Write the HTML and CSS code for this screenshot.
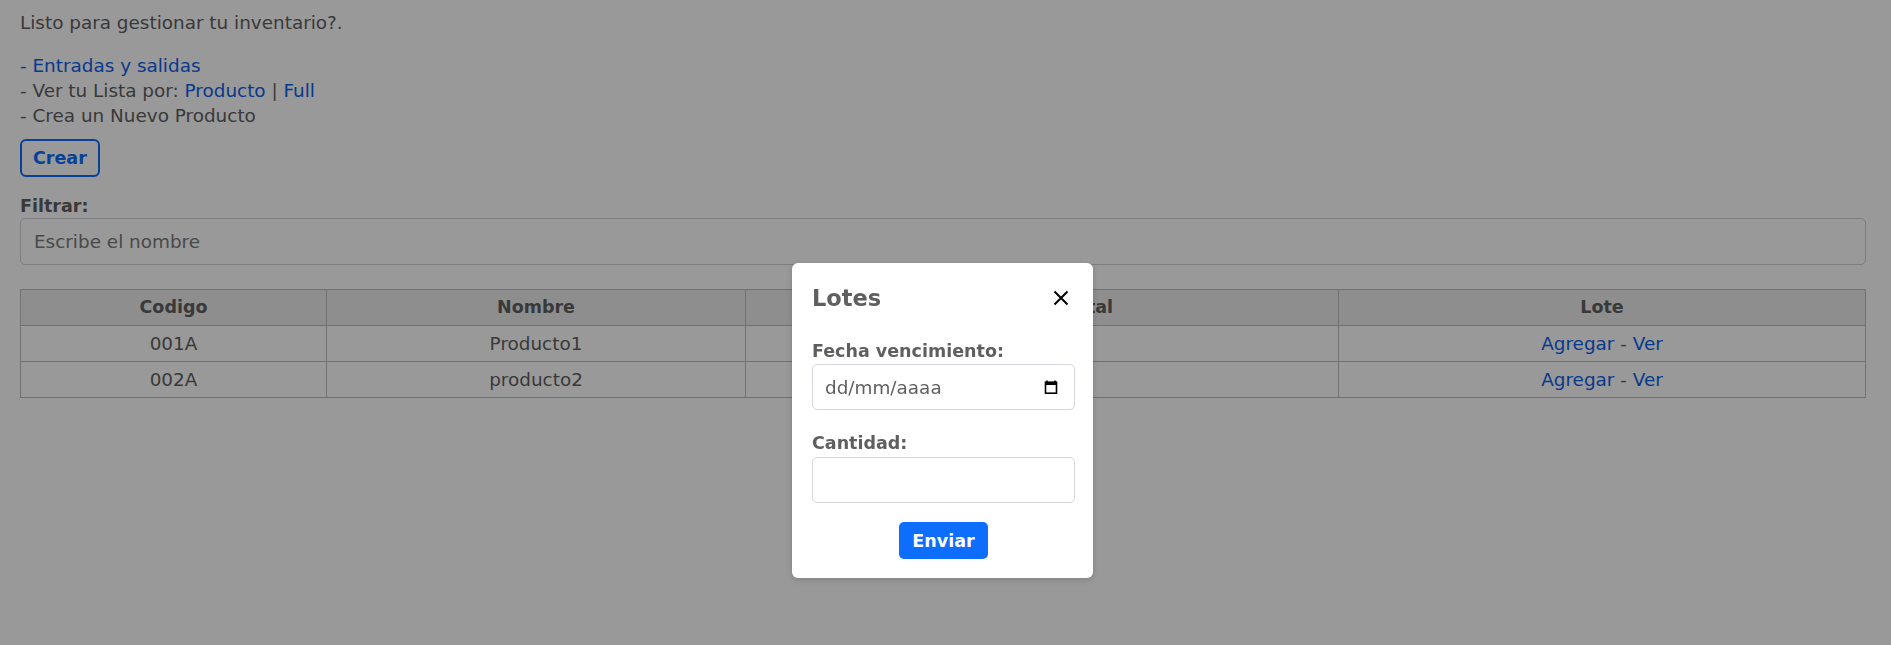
FILE: index.html
```html
<!DOCTYPE html>
<html lang="es">
<head>
<meta charset="utf-8">
<title>Inventario</title>
<link rel="stylesheet" href="styles.css">
</head>
<body>
<main class="page">
  <p class="intro">Listo para gestionar tu inventario?.</p>
  <div class="menu">
    <a class="link menu-line" href="#">- Entradas y salidas</a>
    <div class="menu-line">- Ver tu Lista por: <a class="link" href="#">Producto</a> | <a class="link" href="#">Full</a></div>
    <div class="menu-line">- Crea un Nuevo Producto</div>
  </div>
  <button class="btn-outline" type="button">Crear</button>
  <label class="field-label" for="filtro">Filtrar:</label>
  <input id="filtro" class="filter" type="text" placeholder="Escribe el nombre">
  <table class="grid">
    <colgroup>
      <col class="c-code">
      <col class="c-name">
      <col class="c-total">
      <col class="c-lote">
    </colgroup>
    <thead>
      <tr><th>Codigo</th><th>Nombre</th><th>Cantidad Total</th><th>Lote</th></tr>
    </thead>
    <tbody>
      <tr><td>001A</td><td>Producto1</td><td>10</td><td><a class="link" href="#">Agregar</a> - <a class="link" href="#">Ver</a></td></tr>
      <tr><td>002A</td><td>producto2</td><td>5</td><td><a class="link" href="#">Agregar</a> - <a class="link" href="#">Ver</a></td></tr>
    </tbody>
  </table>
</main>
<div class="backdrop"></div>
<div class="modal">
  <div class="modal-head">
    <h2 class="modal-title">Lotes</h2>
    <span class="close" aria-label="Cerrar">
      <svg width="16" height="16" viewBox="0 0 16 16"><path d="M1.5 1.5 L14.5 14.5 M14.5 1.5 L1.5 14.5" stroke="#000" stroke-width="2" fill="none" stroke-linecap="butt"/></svg>
    </span>
  </div>
  <label class="modal-label first">Fecha vencimiento:</label>
  <div class="date-field">
    <span class="date-text">dd/mm/aaaa</span>
    <svg class="cal" width="14" height="14" viewBox="0 0 14 14"><path d="M3 0.5 V2.5 M11 0.5 V2.5" stroke="#000" stroke-width="1.6"/><rect x="1.5" y="2.2" width="11" height="11" fill="none" stroke="#000" stroke-width="1.6"/><rect x="1.5" y="2.2" width="11" height="2.8" fill="#000"/></svg>
  </div>
  <label class="modal-label second">Cantidad:</label>
  <input class="modal-input" type="text">
  <button class="btn-primary" type="button">Enviar</button>
</div>
</body>
</html>
```

FILE: styles.css
```css
html, body {
  margin: 0;
  padding: 0;
  background: #ffffff;
}

body {
  font-family: "DejaVu Sans", sans-serif;
  font-size: 18.4px;
  color: #5f5f5f;
  height: 645px;
  overflow: hidden;
}

.page {
  display: flex;
  flex-direction: column;
  align-items: flex-start;
  padding: 10px 25px 0 20px;
}

.intro {
  margin: 0 0 18px;
  line-height: 25px;
}

.menu {
  display: flex;
  flex-direction: column;
  line-height: 25px;
}

.link {
  color: #0d62ec;
  text-decoration: none;
}

.btn-outline {
  margin-top: 11px;
  height: 38px;
  padding: 0 11px;
  box-sizing: border-box;
  border: 2px solid #0d6efd;
  border-radius: 6px;
  background: transparent;
  color: #0d6efd;
  font-family: "DejaVu Sans", sans-serif;
  font-weight: bold;
  font-size: 17.5px;
}

.field-label {
  margin-top: 18px;
  margin-bottom: 1px;
  font-weight: bold;
  font-size: 17.5px;
  line-height: 22px;
}

.filter {
  align-self: stretch;
  box-sizing: border-box;
  height: 47px;
  margin: 0;
  padding: 0 13px;
  border: 1px solid #cfd3d8;
  border-radius: 5px;
  font-family: "DejaVu Sans", sans-serif;
  font-size: 18.4px;
  color: #5f5f5f;
}

.filter::placeholder {
  color: #7a7a7a;
}

.grid {
  align-self: stretch;
  margin-top: 24px;
  border-collapse: collapse;
  table-layout: fixed;
  width: 100%;
}

.c-code { width: 306px; }
.c-name { width: 419px; }
.c-total { width: 593px; }
.c-lote { width: auto; }

.grid th,
.grid td {
  border: 1px solid #bdbdbd;
  padding: 6px 8px;
  text-align: center;
  line-height: 23px;
}

.grid th {
  background: #ededed;
  font-weight: bold;
  font-size: 17.5px;
}

.grid td {
  font-size: 18.4px;
}

.backdrop {
  position: fixed;
  inset: 0;
  background: rgba(0, 0, 0, 0.4);
}

.modal {
  position: absolute;
  left: 792px;
  top: 263px;
  width: 301px;
  box-sizing: border-box;
  padding: 18px 18px 19px 20px;
  background: #ffffff;
  border-radius: 6px;
  box-shadow: 0 2px 6px rgba(0, 0, 0, 0.15);
  display: flex;
  flex-direction: column;
}

.modal-head {
  display: flex;
  align-items: center;
  justify-content: space-between;
  height: 34px;
}

.modal-title {
  margin: 0;
  font-size: 22.5px;
  font-weight: bold;
  line-height: 34px;
  color: #5f5f5f;
}

.close {
  display: flex;
  margin-right: 6px;
}

.modal-label {
  font-weight: bold;
  font-size: 17.5px;
  line-height: 22px;
  color: #5f5f5f;
}

.modal-label.first {
  margin-top: 25px;
  margin-bottom: 2px;
}

.modal-label.second {
  margin-top: 22px;
  margin-bottom: 3px;
}

.date-field,
.modal-input {
  box-sizing: border-box;
  height: 46px;
  width: 100%;
  margin: 0;
  border: 1px solid #d3d6da;
  border-radius: 5px;
  background: #fff;
}

.date-field {
  display: flex;
  align-items: center;
  justify-content: space-between;
  padding: 0 16px 0 12px;
}

.date-text {
  font-size: 18.4px;
  color: #5f5f5f;
}

.cal {
  display: block;
}

.btn-primary {
  align-self: center;
  margin-top: 19px;
  height: 37px;
  padding: 0 13px;
  border: none;
  border-radius: 5px;
  background: #0d6efd;
  color: #ffffff;
  font-family: "DejaVu Sans", sans-serif;
  font-weight: bold;
  font-size: 17.5px;
}
```
